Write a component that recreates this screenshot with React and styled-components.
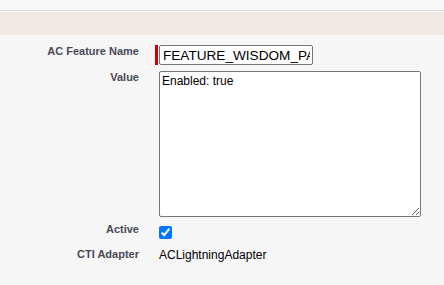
import React from 'react';
import styled, { createGlobalStyle } from 'styled-components';

const GlobalStyle = createGlobalStyle`
  html, body {
    margin: 0;
    padding: 0;
    background: #f6f6f6;
    font-family: "Liberation Sans", Arial, sans-serif;
  }
`;

const Page = styled.div`
  width: 444px;
  height: 285px;
  background: #f6f6f6;
  overflow: hidden;
`;

const TopStrip = styled.div`
  height: 10px;
  background: #f8f8f8;
  border-bottom: 1px solid #d9d9d9;
  margin-bottom: 1px;
`;

const Band = styled.div`
  height: 23px;
  background: #eee9e5;
`;

const Form = styled.div`
  display: grid;
  grid-template-columns: 139px 1fr;
  column-gap: 16px;
  row-gap: 6px;
  padding-top: 10px;
  align-items: start;
`;

const Label = styled.div`
  text-align: right;
  font-size: 11px;
  line-height: 13px;
  font-weight: bold;
  color: #4a4a56;
`;

const Field = styled.div`
  display: flex;
  align-items: stretch;
  padding-left: ${(p) => (p.$required ? 0 : 4)}px;
`;

const RequiredBar = styled.div`
  width: 3px;
  background: #c00;
  margin-right: 1px;
`;

const TextInput = styled.input`
  box-sizing: border-box;
  width: 154px;
  height: 20px;
  padding: 0 2px 0 3px;
  border: 1px solid #767676;
  border-radius: 2px;
  background: #fff;
  font-family: "Liberation Sans", Arial, sans-serif;
  font-size: 13.6px;
  color: #000;
  outline: none;
`;

const TextArea = styled.textarea`
  box-sizing: border-box;
  width: 262px;
  height: 146px;
  padding: 2px;
  border: 1px solid #767676;
  border-radius: 2px;
  background: #fff;
  font-family: "Liberation Sans", Arial, sans-serif;
  font-size: 12px;
  color: #000;
  outline: none;
`;

const Check = styled.input`
  width: 13px;
  height: 13px;
  margin: 3px 3px 3px 0;
  accent-color: #0075ff;
`;

const Value = styled.div`
  font-size: 12px;
  line-height: 15px;
  color: #000;
`;

export default function App() {
  return (
    <Page>
      <GlobalStyle />
      <TopStrip />
      <Band />
      <Form>
        <Label>AC Feature Name</Label>
        <Field $required>
          <RequiredBar />
          <TextInput type="text" defaultValue="FEATURE_WISDOM_PANEL" />
        </Field>

        <Label>Value</Label>
        <Field>
          <TextArea defaultValue="Enabled: true" />
        </Field>

        <Label>Active</Label>
        <Field>
          <Check type="checkbox" defaultChecked />
        </Field>

        <Label>CTI Adapter</Label>
        <Field>
          <Value>ACLightningAdapter</Value>
        </Field>
      </Form>
    </Page>
  );
}
